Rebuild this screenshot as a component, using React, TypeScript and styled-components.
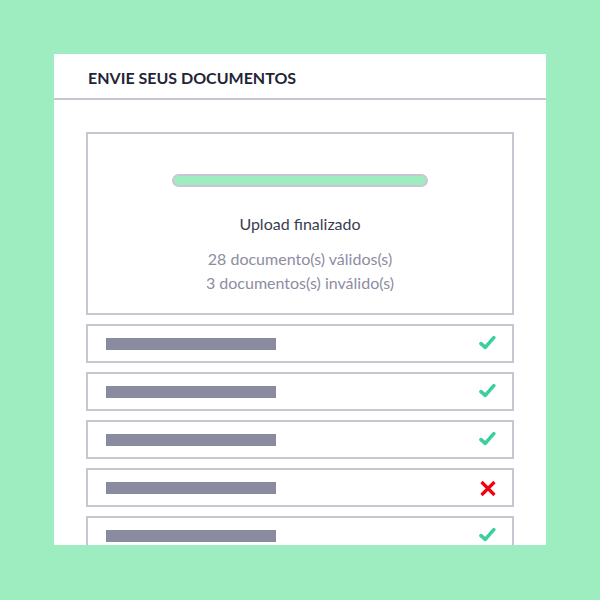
import React from "react";
import styled, { createGlobalStyle } from "styled-components";

const GlobalStyle = createGlobalStyle`
  html, body {
    margin: 0;
    padding: 0;
    background-color: #9eedc0;
  }
  body {
    font-family: Lato, "Open Sans", sans-serif;
  }
`

const Page = styled.div`
  width: 600px;
  height: 600px;
  padding: 54px 54px 0;
  box-sizing: border-box;
`

const Card = styled.div`
  width: 492px;
  height: 491px;
  background-color: #ffffff;
  overflow: hidden;
  display: flex;
  flex-direction: column;
`

const Header = styled.div`
  height: 44px;
  flex-shrink: 0;
  padding: 0 34px;
  display: flex;
  align-items: center;
  border-bottom: 2px solid #c8c7d1;
`

const Title = styled.h1`
  margin: 0;
  padding-top: 2px;
  font-size: 16px;
  font-weight: 700;
  color: #1f2536;
`

const Body = styled.div`
  flex-shrink: 0;
  padding: 32px 32px 0;
  display: flex;
  flex-direction: column;
  gap: 9px;
`

const UploadBox = styled.div`
  height: 183px;
  flex-shrink: 0;
  box-sizing: border-box;
  border: 2px solid #c8c7d1;
  display: flex;
  flex-direction: column;
  align-items: center;
  padding-top: 40px;
`

const Progress = styled.div`
  width: 256px;
  height: 13px;
  box-sizing: border-box;
  border: 2px solid #c8c7d1;
  border-radius: 7px;
  background-color: #9eedc0;
`

const Status = styled.p`
  margin: 25px 0 0;
  font-size: 16px;
  line-height: 24px;
  color: #3a3d50;
`

const Counts = styled.p`
  margin: 11px 0 0;
  font-size: 16px;
  line-height: 24px;
  color: #8e8ca2;
  text-align: center;
`

const Row = styled.div`
  height: 39px;
  box-sizing: border-box;
  border: 2px solid #c8c7d1;
  display: flex;
  align-items: center;
  justify-content: space-between;
  padding: 0 16px 0 18px;
  flex-shrink: 0;
`

const NameBar = styled.div`
  width: 170px;
  height: 12px;
  background-color: #8b8b9f;
`

const Check = () => (
  <svg width="18" height="18" viewBox="0 0 18 18">
    <path
      d="M3 8.6 L7.3 12.4 L15.8 2.6"
      fill="none"
      stroke="#3ccf9c"
      strokeWidth="3.6"
      strokeLinecap="round"
      strokeLinejoin="round"
    />
  </svg>
)

const Cross = () => (
  <svg width="18" height="18" viewBox="0 0 18 18">
    <path
      d="M3.5 3 L16.5 16 M16.5 3 L3.5 16"
      fill="none"
      stroke="#f2000f"
      strokeWidth="3.2"
    />
  </svg>
)

const files = [true, true, true, false, true];

const App = () => {
  return (
    <>
      <GlobalStyle />
      <Page>
        <Card>
          <Header>
            <Title>ENVIE SEUS DOCUMENTOS</Title>
          </Header>
          <Body>
            <UploadBox>
              <Progress />
              <Status>Upload finalizado</Status>
              <Counts>
                28 documento(s) válidos(s)
                <br />
                3 documentos(s) inválido(s)
              </Counts>
            </UploadBox>
            {files.map((valid, i) => (
              <Row key={i}>
                <NameBar />
                {valid ? <Check /> : <Cross />}
              </Row>
            ))}
          </Body>
        </Card>
      </Page>
    </>
  )
}

export default App;
